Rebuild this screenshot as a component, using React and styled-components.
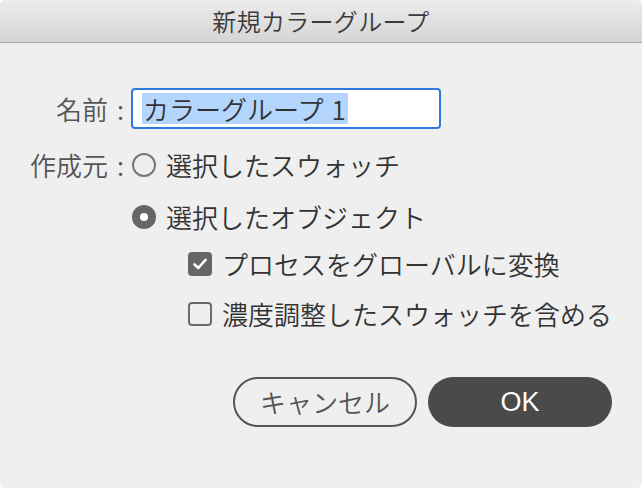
import React from "react";
import styled, { createGlobalStyle } from "styled-components";

const GlobalStyle = createGlobalStyle`
  html, body {
    margin: 0;
    padding: 0;
    background: #ffffff;
  }
  body {
    font-family: "Noto Sans CJK JP", "Liberation Sans", sans-serif;
  }
`;

const Window = styled.div`
  width: 642px;
  height: 488px;
  display: flex;
  flex-direction: column;
  background: #efefef;
  border-radius: 6px;
  overflow: hidden;
  font-weight: 350;
`;

const TitleBar = styled.div`
  height: 42px;
  flex-shrink: 0;
  display: flex;
  align-items: center;
  justify-content: center;
  background: linear-gradient(#ececec, #d5d5d5);
  border-bottom: 1px solid #a8a8a8;
  color: #3a3a3a;
  font-size: 24px;
  line-height: 30px;
  letter-spacing: 0.3px;
`;

const Body = styled.div`
  display: flex;
  flex-direction: column;
  padding: 45px 30px 0 0;
`;

const Row = styled.div`
  display: grid;
  grid-template-columns: 124px 1fr;
  column-gap: ${(p) => p.$gap || 7}px;
  align-items: center;
  margin-top: ${(p) => p.$top || 0}px;
`;

const Label = styled.div`
  text-align: right;
  color: #555;
  font-size: 26px;
  line-height: 30px;
  white-space: nowrap;
`;

const Colon = styled.span`
  margin-left: 9px;
`;

const NameField = styled.div`
  width: 310px;
  height: 41px;
  box-sizing: border-box;
  border: 2.5px solid #2f79de;
  border-radius: 4px;
  background: #fff;
  display: flex;
  align-items: center;
  padding-left: 9px;
`;

const Selection = styled.span`
  background: #b4d6fd;
  color: #333;
  font-size: 26px;
  line-height: 31px;
  padding: 0 2px 0 1px;
`;

const Gap = styled.span`
  display: inline-block;
  width: 8px;
`;

const Options = styled.div`
  display: flex;
  flex-direction: column;
  gap: ${(p) => p.$gap}px;
  padding-left: ${(p) => p.$indent || 0}px;
  margin-top: ${(p) => p.$top || 0}px;
`;

const Option = styled.div`
  display: flex;
  align-items: center;
  gap: 10px;
  height: 30px;
  line-height: 30px;
  color: #333;
  font-size: 26px;
  white-space: nowrap;
`;

const Radio = styled.span`
  width: 24px;
  height: 24px;
  box-sizing: border-box;
  border-radius: 50%;
  flex-shrink: 0;
  display: flex;
  align-items: center;
  justify-content: center;
  border: ${(p) => (p.$on ? "none" : "2px solid #777")};
  background: ${(p) => (p.$on ? "#666" : "transparent")};

  &::after {
    content: "";
    display: ${(p) => (p.$on ? "block" : "none")};
    width: 8px;
    height: 8px;
    border-radius: 50%;
    background: #fff;
  }
`;

const Box = styled.span`
  width: 24px;
  height: 24px;
  box-sizing: border-box;
  border-radius: 4px;
  flex-shrink: 0;
  display: flex;
  align-items: center;
  justify-content: center;
  border: ${(p) => (p.$on ? "none" : "2px solid #6a6a6a")};
  background: ${(p) => (p.$on ? "#666" : "transparent")};
`;

const Buttons = styled.div`
  display: flex;
  justify-content: flex-end;
  gap: 11px;
  margin-top: 48px;
`;

const Button = styled.button`
  width: 184px;
  height: 50px;
  box-sizing: border-box;
  border-radius: 25px;
  font-family: "Noto Sans CJK JP", "Liberation Sans", sans-serif;
  font-weight: 350;
  font-size: 26px;
  line-height: 30px;
  display: flex;
  align-items: center;
  justify-content: center;
  padding: 0;
  border: ${(p) => (p.$primary ? "none" : "2px solid #555")};
  background: ${(p) => (p.$primary ? "#4a4a4a" : "transparent")};
  color: ${(p) => (p.$primary ? "#fff" : "#555")};
`;

const OkText = styled.span`
  font-family: "Liberation Sans", "Noto Sans", sans-serif;
  font-weight: 400;
  font-size: 27px;
`;

const Check = () => (
  <svg width="16" height="16" viewBox="0 0 16 16">
    <path d="M2.5 8.5 L6.3 12 L13.5 3.8" fill="none" stroke="#fff" strokeWidth="2.6"
          strokeLinecap="round" strokeLinejoin="round" />
  </svg>
);

const App = () => {
  return (
    <>
      <GlobalStyle />
      <Window>
        <TitleBar>新規カラーグループ</TitleBar>
        <Body>
          <Row>
            <Label>名前<Colon>:</Colon></Label>
            <NameField>
              <Selection>カラーグループ<Gap />1</Selection>
            </NameField>
          </Row>
          <Row $top={21} $gap={8}>
            <Label>作成元<Colon>:</Colon></Label>
            <Option>
              <Radio />
              選択したスウォッチ
            </Option>
          </Row>
          <Options $gap={20} $indent={132} $top={22}>
            <Option>
              <Radio $on />
              選択したオブジェクト
            </Option>
          </Options>
          <Options $gap={20} $indent={188} $top={17}>
            <Option>
              <Box $on><Check /></Box>
              プロセスをグローバルに変換
            </Option>
            <Option>
              <Box />
              濃度調整したスウォッチを含める
            </Option>
          </Options>
          <Buttons>
            <Button>キャンセル</Button>
            <Button $primary><OkText>OK</OkText></Button>
          </Buttons>
        </Body>
      </Window>
    </>
  );
};

export default App;
